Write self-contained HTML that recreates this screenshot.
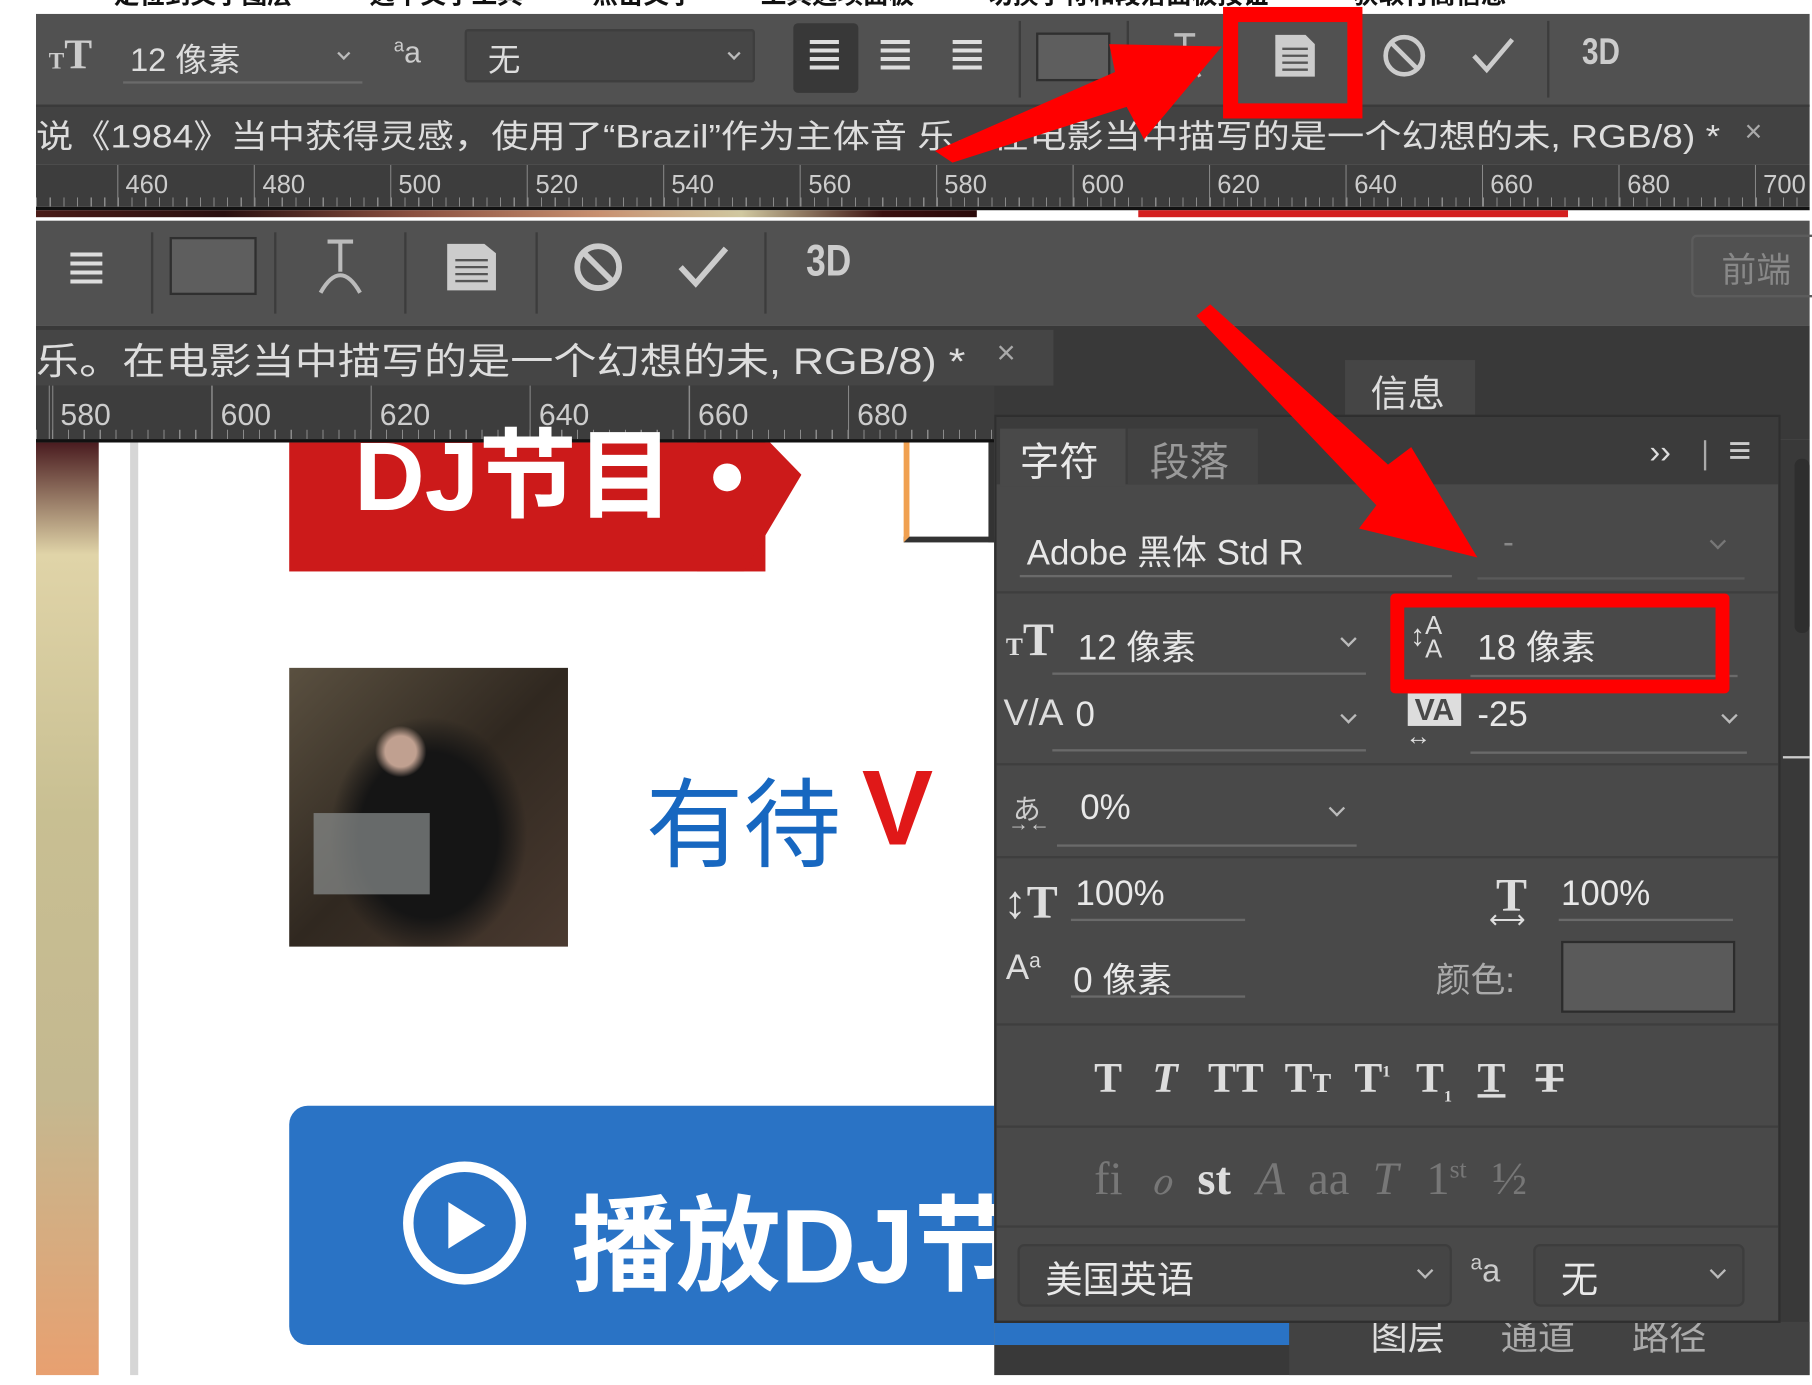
<!DOCTYPE html>
<html><head><meta charset="utf-8">
<style>
*{margin:0;padding:0;box-sizing:border-box}
html,body{width:1812px;height:1384px;overflow:hidden;background:#fff}
body{font-family:"Liberation Sans","Noto Sans CJK SC",sans-serif}
#w{position:absolute;left:0;top:0;width:1560px;height:1192px;transform:scale(1.1615);transform-origin:0 0;overflow:hidden;background:#fff}
.a{position:absolute}
.t{position:absolute;white-space:nowrap;color:#ddd}
.ruler{background:#3d3d3d;background-image:repeating-linear-gradient(90deg,#8a8a8a 0 1px,transparent 1px 11.75px);background-size:100% 8px;background-repeat:repeat-x;background-position:0 100%}
.ul{position:absolute;height:2px;background:#6a6a6a}
.sep{position:absolute;height:2px;background:#3e3e3e;left:0;right:0}
.chev{position:absolute;width:10px;height:10px;border-right:2px solid #bbb;border-bottom:2px solid #bbb;transform:rotate(45deg)}
.vs{position:absolute;width:2px;background:#3c3c3c}
.ser{font-family:"Liberation Serif",serif;font-weight:bold}
</style></head><body><div id="w">
<div class="t" style="left:98px;top:-22px;color:#111;font-size:22px;font-weight:bold">定位到文字图层</div>
<div class="t" style="left:318px;top:-22px;color:#111;font-size:22px;font-weight:bold">选中文字工具</div>
<div class="t" style="left:510px;top:-22px;color:#111;font-size:22px;font-weight:bold">点击文字</div>
<div class="t" style="left:655px;top:-22px;color:#111;font-size:22px;font-weight:bold">工具选项面板</div>
<div class="t" style="left:850px;top:-22px;color:#111;font-size:22px;font-weight:bold">切换字符和段落面板按钮</div>
<div class="t" style="left:1165px;top:-22px;color:#111;font-size:22px;font-weight:bold">获取行高信息</div>

<div class="a" style="left:31px;top:12px;width:1527px;height:78px;background:#515151"></div>
<div class="t ser" style="left:42px;top:26px;font-size:36px;color:#ccc"><span style="font-size:20px">T</span>T</div>
<div class="t" style="left:112px;top:30px;font-size:28px">12 像素</div>
<div class="ul" style="left:106px;top:70px;width:206px"></div>
<div class="chev" style="left:292px;top:42px;width:8px;height:8px"></div>
<div class="t" style="left:339px;top:30px;font-size:26px;color:#ccc"><sup style="font-size:16px">a</sup>a</div>
<div class="a" style="left:400px;top:25px;width:250px;height:46px;background:#464646;border:2px solid #3e3e3e;border-radius:3px"></div>
<div class="t" style="left:420px;top:30px;font-size:28px">无</div>
<div class="chev" style="left:628px;top:42px;width:8px;height:8px"></div>
<div class="a" style="left:683px;top:20px;width:56px;height:60px;background:#383838;border-radius:4px"></div>
<div class="t" style="left:693px;top:22px;font-size:40px;color:#ddd;line-height:50px">≣</div>
<div class="t" style="left:754px;top:22px;font-size:40px;color:#ddd;line-height:50px">≣</div>
<div class="t" style="left:816px;top:22px;font-size:40px;color:#ddd;line-height:50px">≣</div>
<div class="vs" style="left:877px;top:18px;height:66px"></div>
<div class="a" style="left:892px;top:28px;width:64px;height:42px;background:#5e5e5e;border:2px solid #2f2f2f"></div>
<div class="vs" style="left:970px;top:18px;height:66px"></div>
<svg class="a" style="left:1003px;top:26px" width="34" height="44"><path d="M8 4h18M17 4v22M4 40q13-24 26 0" fill="none" stroke="#bbb" stroke-width="3"/></svg>
<svg class="a" style="left:1096px;top:28px" width="38" height="40"><path d="M2 2h26l8 8v28H2z" fill="#ccc"/><path d="M8 14h22M8 20h22M8 26h22M8 32h22" stroke="#555" stroke-width="2"/></svg>
<svg class="a" style="left:1189px;top:28px" width="40" height="40"><circle cx="20" cy="20" r="16" fill="none" stroke="#ccc" stroke-width="4"/><path d="M9 9l22 22" stroke="#ccc" stroke-width="4"/></svg>
<svg class="a" style="left:1266px;top:30px" width="40" height="36"><path d="M3 18l11 12L36 4" fill="none" stroke="#ccc" stroke-width="4"/></svg>
<div class="vs" style="left:1332px;top:18px;height:66px"></div>
<div class="t" style="left:1362px;top:26px;font-size:32px;font-weight:bold;color:#ccc;transform:scaleX(.8);transform-origin:0 0">3D</div>
<div class="a" style="left:31px;top:90px;width:1527px;height:52px;background:#424242;border-top:2px solid #3a3a3a"></div>
<div class="t" style="left:31px;top:96px;font-size:28px;color:#ddd;transform:scaleX(1.145);transform-origin:0 0">说《1984》当中获得灵感，使用了“Brazil”作为主体音 乐。在电影当中描写的是一个幻想的未, RGB/8) *</div>
<div class="t" style="left:1502px;top:98px;font-size:26px;color:#aaa">×</div>
<div class="a ruler" style="left:31px;top:142px;width:1527px;height:36px"></div>
<div class="a" style="left:31px;top:142px;width:1527px;height:36px;background-image:repeating-linear-gradient(90deg,#8a8a8a 0 1px,transparent 1px 117.5px);background-position:70px 0"></div>
<div class="t" style="left:108px;top:146px;font-size:22px;color:#ccc">460</div>
<div class="t" style="left:226px;top:146px;font-size:22px;color:#ccc">480</div>
<div class="t" style="left:343px;top:146px;font-size:22px;color:#ccc">500</div>
<div class="t" style="left:461px;top:146px;font-size:22px;color:#ccc">520</div>
<div class="t" style="left:578px;top:146px;font-size:22px;color:#ccc">540</div>
<div class="t" style="left:696px;top:146px;font-size:22px;color:#ccc">560</div>
<div class="t" style="left:813px;top:146px;font-size:22px;color:#ccc">580</div>
<div class="t" style="left:931px;top:146px;font-size:22px;color:#ccc">600</div>
<div class="t" style="left:1048px;top:146px;font-size:22px;color:#ccc">620</div>
<div class="t" style="left:1166px;top:146px;font-size:22px;color:#ccc">640</div>
<div class="t" style="left:1283px;top:146px;font-size:22px;color:#ccc">660</div>
<div class="t" style="left:1401px;top:146px;font-size:22px;color:#ccc">680</div>
<div class="t" style="left:1518px;top:146px;font-size:22px;color:#ccc">700</div>
<div class="a" style="left:31px;top:178px;width:1527px;height:3px;background:#111"></div>
<div class="a" style="left:31px;top:181px;width:810px;height:6px;background:linear-gradient(90deg,#4a1c18,#2a1010 20%,#8a5040 40%,#c89070 60%,#d0c8a0 75%,#3a1010 90%,#2a0a0a)"></div>
<div class="a" style="left:980px;top:181px;width:370px;height:6px;background:#d42020"></div>

<div class="a" style="left:31px;top:190px;width:1527px;height:90px;background:#515151"></div>
<div class="t" style="left:56px;top:200px;font-size:44px;color:#ddd;line-height:60px">≣</div>
<div class="vs" style="left:130px;top:200px;height:70px"></div>
<div class="a" style="left:146px;top:204px;width:75px;height:50px;background:#5e5e5e;border:2px solid #2f2f2f"></div>
<div class="vs" style="left:236px;top:200px;height:70px"></div>
<svg class="a" style="left:272px;top:204px" width="42" height="52"><path d="M10 4h22M21 4v26M4 48q17-30 34 0" fill="none" stroke="#bbb" stroke-width="3.5"/></svg>
<div class="vs" style="left:348px;top:200px;height:70px"></div>
<svg class="a" style="left:383px;top:208px" width="46" height="44"><path d="M2 2h32l10 8v32H2z" fill="#ccc"/><path d="M9 16h28M9 22h28M9 28h28M9 34h28" stroke="#555" stroke-width="2"/></svg>
<div class="vs" style="left:461px;top:200px;height:70px"></div>
<svg class="a" style="left:492px;top:207px" width="46" height="46"><circle cx="23" cy="23" r="18" fill="none" stroke="#ccc" stroke-width="5"/><path d="M10 10l26 26" stroke="#ccc" stroke-width="5"/></svg>
<svg class="a" style="left:583px;top:210px" width="46" height="40"><path d="M3 20l13 14L42 4" fill="none" stroke="#ccc" stroke-width="5"/></svg>
<div class="vs" style="left:658px;top:200px;height:70px"></div>
<div class="t" style="left:694px;top:204px;font-size:38px;font-weight:bold;color:#ccc;transform:scaleX(.8);transform-origin:0 0">3D</div>
<div class="a" style="left:1456px;top:202px;width:110px;height:54px;border:2px solid #5c5c5c;border-radius:5px"></div>
<div class="t" style="left:1482px;top:208px;font-size:30px;color:#888">前端</div>
<div class="a" style="left:31px;top:280px;width:1527px;height:98px;background:#393939"></div>
<div class="a" style="left:31px;top:284px;width:876px;height:48px;background:#454545"></div>
<div class="t" style="left:31px;top:286px;font-size:32px;color:#ddd;transform:scaleX(1.16);transform-origin:0 0">乐。在电影当中描写的是一个幻想的未, RGB/8) *</div>
<div class="t" style="left:858px;top:288px;font-size:28px;color:#aaa">×</div>
<div class="a" style="left:1158px;top:310px;width:112px;height:48px;background:#454545"></div>
<div class="t" style="left:1180px;top:314px;font-size:32px;color:#ddd">信息</div>
<div class="a ruler" style="left:31px;top:332px;width:825px;height:46px;background-image:repeating-linear-gradient(90deg,#8a8a8a 0 1px,transparent 1px 13.7px)"></div>
<div class="a" style="left:31px;top:332px;width:825px;height:46px;background-image:repeating-linear-gradient(90deg,#8a8a8a 0 1px,transparent 1px 137px);background-position:14px 0"></div>
<div class="t" style="left:52px;top:342px;font-size:26px;color:#ccc">580</div>
<div class="t" style="left:190px;top:342px;font-size:26px;color:#ccc">600</div>
<div class="t" style="left:327px;top:342px;font-size:26px;color:#ccc">620</div>
<div class="t" style="left:464px;top:342px;font-size:26px;color:#ccc">640</div>
<div class="t" style="left:601px;top:342px;font-size:26px;color:#ccc">660</div>
<div class="t" style="left:738px;top:342px;font-size:26px;color:#ccc">680</div>
<div class="a" style="left:31px;top:378px;width:825px;height:3px;background:#111"></div>

<div class="a" style="left:31px;top:381px;width:825px;height:803px;background:#fff"></div>
<div class="a" style="left:31px;top:381px;width:54px;height:803px;background:linear-gradient(180deg,#4a1c20 0,#e0d4a8 12%,#c8bf92 40%,#c4b890 70%,#e8a070 100%)"></div>
<div class="a" style="left:112px;top:381px;width:7px;height:803px;background:#d6d6d6"></div>
<div class="a" style="left:249px;top:381px;width:410px;height:111px;background:#cc1a1a"></div>
<div class="a" style="left:600px;top:381px;width:90px;height:111px;background:#cc1a1a;clip-path:polygon(0 0,70% 0,100% 25%,45% 100%,0 100%)"></div>
<div class="t" style="left:305px;top:360px;font-size:84px;font-weight:bold;color:#fff;line-height:100px">DJ节目</div>
<div class="a" style="left:614px;top:399px;width:24px;height:24px;border-radius:50%;background:#fff"></div>
<div class="a" style="left:778px;top:381px;width:78px;height:86px;border:5px solid #333;border-top:none;border-left-color:#f0a050;background:#fff"></div>
<div class="a" style="left:249px;top:575px;width:240px;height:240px;background:radial-gradient(circle at 40% 30%,#c0a090 0 6%,transparent 10%),radial-gradient(ellipse at 50% 60%,#151515 0 35%,transparent 50%),linear-gradient(135deg,#5a5040,#302820 50%,#4a3a30)"></div>
<div class="a" style="left:270px;top:700px;width:100px;height:70px;background:#8a8e8e;opacity:.7"></div>
<div class="t" style="left:556px;top:644px;font-size:84px;color:#1767c0">有待</div>
<div class="t" style="left:742px;top:644px;font-size:92px;color:#e01818;font-weight:bold">V</div>
<div class="a" style="left:249px;top:952px;width:607px;height:206px;background:#2a73c5;border-radius:16px 0 0 16px"></div>
<div class="a" style="left:347px;top:1000px;width:106px;height:106px;border:9px solid #fff;border-radius:50%"></div>
<div class="a" style="left:386px;top:1035px;width:0;height:0;border-left:32px solid #fff;border-top:20px solid transparent;border-bottom:20px solid transparent"></div>
<div class="t" style="left:492px;top:1000px;font-size:90px;color:#fff;font-weight:bold">播放DJ节目</div>

<div class="a" style="left:856px;top:378px;width:702px;height:806px;background:#393939"></div>
<div class="a" style="left:856px;top:1138px;width:254px;height:20px;background:#2a73c5"></div>
<div class="a" style="left:1110px;top:1138px;width:448px;height:46px;background:#424242"></div>
<div class="t" style="left:1180px;top:1126px;font-size:32px;color:#ddd">图层</div>
<div class="t" style="left:1292px;top:1126px;font-size:32px;color:#aaa">通道</div>
<div class="t" style="left:1405px;top:1126px;font-size:32px;color:#aaa">路径</div>
<div class="a" style="left:1545px;top:395px;width:13px;height:150px;background:#2e2e2e;border-radius:6px"></div>
<div class="a" style="left:1535px;top:651px;width:23px;height:2px;background:#ccc"></div>

<div class="a" style="left:856px;top:357px;width:677px;height:782px;background:#494949;border:2px solid #2f2f2f">
 <div class="a" style="left:0;top:0;width:673px;height:58px;background:#3b3b3b"></div>
 <div class="a" style="left:3px;top:10px;width:108px;height:50px;background:#494949"></div>
 <div class="t" style="left:20px;top:12px;font-size:34px;color:#e8e8e8">字符</div>
 <div class="a" style="left:113px;top:10px;width:112px;height:48px;background:#424242"></div>
 <div class="t" style="left:132px;top:12px;font-size:34px;color:#999">段落</div>
 <div class="t" style="left:562px;top:14px;font-size:28px;color:#ddd">››</div>
 <div class="a" style="left:609px;top:20px;width:2px;height:26px;background:#aaa"></div>
 <div class="t" style="left:630px;top:10px;font-size:34px;color:#ccc">≡</div>
 <div class="t" style="left:26px;top:92px;font-size:30px;color:#e8e8e8">Adobe 黑体 Std R</div>
 <div class="ul" style="left:20px;top:136px;width:372px"></div>
 <div class="t" style="left:436px;top:92px;font-size:28px;color:#888">-</div>
 <div class="chev" style="left:616px;top:102px;border-color:#777"></div>
 <div class="ul" style="left:414px;top:138px;width:230px;background:#5a5a5a"></div>
 <div class="sep" style="top:150px"></div>
 <div class="t ser" style="left:8px;top:168px;font-size:40px;color:#ddd"><span style="font-size:22px">T</span>T</div>
 <div class="t" style="left:70px;top:174px;font-size:30px;color:#e8e8e8">12 像素</div>
 <div class="chev" style="left:298px;top:186px"></div>
 <div class="ul" style="left:48px;top:220px;width:270px"></div>
 <div class="t" style="left:356px;top:170px;font-size:26px;color:#ddd;line-height:22px">↕<span style="display:inline-block;font-size:22px;line-height:20px;vertical-align:middle">A<br>A</span></div>
 <div class="t" style="left:414px;top:174px;font-size:30px;color:#e8e8e8">18 像素</div>
 <div class="ul" style="left:408px;top:222px;width:230px"></div>
 <div class="t" style="left:6px;top:236px;font-size:32px;color:#ddd">V/A</div>
 <div class="t" style="left:68px;top:240px;font-size:30px;color:#e8e8e8">0</div>
 <div class="chev" style="left:298px;top:252px"></div>
 <div class="ul" style="left:48px;top:286px;width:270px"></div>
 <div class="a" style="left:354px;top:238px;width:46px;height:28px;background:#ddd;color:#494949;font-size:26px;font-weight:bold;text-align:center;line-height:28px">VA</div>
 <div class="t" style="left:352px;top:262px;font-size:22px;color:#ddd">↔</div>
 <div class="t" style="left:414px;top:240px;font-size:30px;color:#e8e8e8">-25</div>
 <div class="chev" style="left:626px;top:252px"></div>
 <div class="ul" style="left:408px;top:288px;width:238px"></div>
 <div class="sep" style="top:298px"></div>
 <div class="t" style="left:14px;top:318px;font-size:24px;color:#ccc">あ</div>
 <div class="t" style="left:10px;top:340px;font-size:18px;color:#ccc">→←</div>
 <div class="t" style="left:72px;top:320px;font-size:30px;color:#e8e8e8">0%</div>
 <div class="chev" style="left:288px;top:332px"></div>
 <div class="ul" style="left:52px;top:368px;width:258px"></div>
 <div class="sep" style="top:378px"></div>
 <div class="t ser" style="left:6px;top:394px;font-size:40px;color:#ddd">↕T</div>
 <div class="t" style="left:68px;top:394px;font-size:30px;color:#e8e8e8">100%</div>
 <div class="ul" style="left:64px;top:432px;width:150px"></div>
 <div class="t ser" style="left:430px;top:388px;font-size:40px;color:#ddd">T</div>
 <div class="t" style="left:424px;top:420px;font-size:22px;color:#ddd">⟷</div>
 <div class="t" style="left:486px;top:394px;font-size:30px;color:#e8e8e8">100%</div>
 <div class="ul" style="left:484px;top:432px;width:150px"></div>
 <div class="t" style="left:8px;top:458px;font-size:30px;color:#ddd">A<span style="font-size:18px;vertical-align:top">a</span></div>
 <div class="t" style="left:66px;top:460px;font-size:30px;color:#e8e8e8">0 像素</div>
 <div class="ul" style="left:64px;top:498px;width:150px"></div>
 <div class="t" style="left:378px;top:460px;font-size:30px;color:#aaa">颜色:</div>
 <div class="a" style="left:486px;top:451px;width:150px;height:62px;background:#5a5a5a;border:2px solid #2c2c2c"></div>
 <div class="sep" style="top:522px"></div>
 <div class="t ser" style="left:84px;top:548px;font-size:36px;color:#ddd"><span style="margin-right:26px">T</span><span style="margin-right:26px;font-style:italic">T</span><span style="margin-right:18px">TT</span><span style="margin-right:20px">T<span style="font-size:24px">T</span></span><span style="margin-right:22px">T<sup style="font-size:14px">1</sup></span><span style="margin-right:22px">T<sub style="font-size:14px">1</sub></span><span style="margin-right:26px;text-decoration:underline">T</span><span style="text-decoration:line-through">T</span></div>
 <div class="sep" style="top:610px"></div>
 <div class="t" style="left:84px;top:632px;font-size:40px;color:#777;font-family:'Liberation Serif',serif"><span style="margin-right:24px">fi</span><span style="margin-right:22px;font-style:italic">ℴ</span><span style="margin-right:22px;color:#ddd;font-weight:bold">st</span><span style="margin-right:20px;font-style:italic">A</span><span style="margin-right:20px">aa</span><span style="margin-right:24px;font-style:italic">T</span><span style="margin-right:22px">1<sup style="font-size:22px">st</sup></span><span>½</span></div>
 <div class="sep" style="top:696px"></div>
 <div class="a" style="left:18px;top:712px;width:374px;height:54px;border:2px solid #3d3d3d;border-radius:6px;background:#454545"></div>
 <div class="t" style="left:42px;top:718px;font-size:32px;color:#e8e8e8">美国英语</div>
 <div class="chev" style="left:364px;top:730px"></div>
 <div class="t" style="left:408px;top:718px;font-size:28px;color:#ccc"><sup style="font-size:18px">a</sup>a</div>
 <div class="a" style="left:462px;top:712px;width:182px;height:54px;border:2px solid #3d3d3d;border-radius:6px;background:#454545"></div>
 <div class="t" style="left:486px;top:718px;font-size:32px;color:#e8e8e8">无</div>
 <div class="chev" style="left:616px;top:730px"></div>
</div>

<div class="a" style="left:1053px;top:6px;width:120px;height:96px;border:13px solid #f00"></div>
<div class="a" style="left:1197px;top:511px;width:292px;height:86px;border:12px solid #f00;border-radius:4px"></div>
<svg class="a" style="left:0;top:0" width="1560" height="1192">
 <polygon points="805,130 960,62 955,38 1052,40 985,120 970,92 820,140" fill="#f00"/>
 <polygon points="1030,272 1042,262 1195,400 1215,385 1272,480 1170,455 1185,435" fill="#f00"/>
</svg>
<div class="a" style="left:0;top:1184px;width:1560px;height:8px;background:#fff"></div>
</div></body></html>
